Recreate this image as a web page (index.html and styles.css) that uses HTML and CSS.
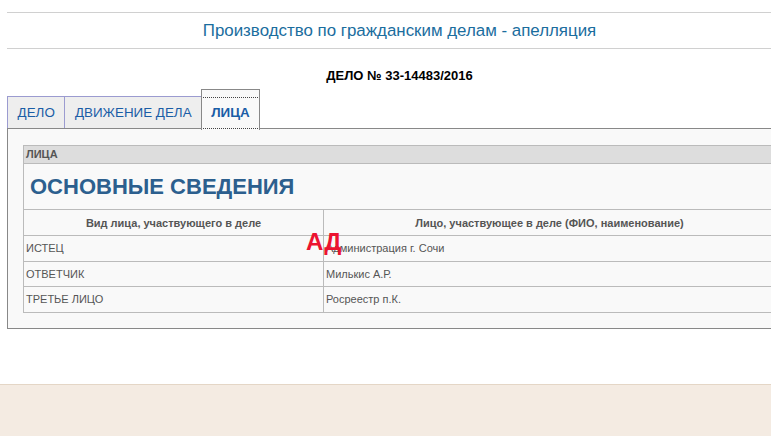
FILE: index.html
```html
<!DOCTYPE html>
<html lang="ru">
<head>
<meta charset="utf-8">
<title>Производство по гражданским делам - апелляция</title>
<link rel="stylesheet" href="styles.css">
</head>
<body>
<div class="page">
  <div class="title">Производство по гражданским делам - апелляция</div>
  <div class="case">ДЕЛО № 33-14483/2016</div>
  <div class="tabs">
    <div class="tab">ДЕЛО</div>
    <div class="tab">ДВИЖЕНИЕ ДЕЛА</div>
    <div class="tab active"><span class="focus">ЛИЦА</span></div>
  </div>
  <div class="panel">
    <table class="grid">
      <tr><td class="cap" colspan="2">ЛИЦА</td></tr>
      <tr><td class="heading" colspan="2">ОСНОВНЫЕ СВЕДЕНИЯ</td></tr>
      <tr class="head"><th class="c1">Вид лица, участвующего в деле</th><th>Лицо, участвующее в деле (ФИО, наименование)</th></tr>
      <tr><td>ИСТЕЦ</td><td>Администрация г. Сочи</td></tr>
      <tr><td>ОТВЕТЧИК</td><td>Милькис А.Р.</td></tr>
      <tr><td>ТРЕТЬЕ ЛИЦО</td><td>Росреестр п.К.</td></tr>
    </table>
  </div>
  <div class="stamp">АД</div>
</div>
<div class="footer"></div>
</body>
</html>
```

FILE: styles.css
```css
html, body {
  margin: 0;
  padding: 0;
  overflow: hidden;
  background: #fff;
  font-family: "Liberation Sans", Arial, sans-serif;
}
.page {
  position: relative;
  margin-left: 7px;
  width: 785px;
  padding-top: 12px;
}
.title {
  border-top: 1px solid #d0d0d0;
  border-bottom: 1px solid #d0d0d0;
  height: 35px;
  line-height: 36px;
  text-align: center;
  font-size: 16.9px;
  color: #1a6d9e;
}
.case {
  margin-top: 17px;
  height: 24px;
  line-height: 20px;
  text-align: center;
  font-size: 13px;
  font-weight: bold;
  color: #000;
}
.tabs {
  display: flex;
  align-items: flex-end;
  height: 39px;
  margin-bottom: -1px;
  position: relative;
  z-index: 1;
}
.tab {
  box-sizing: border-box;
  height: 32px;
  line-height: 32px;
  padding: 0 9.6px;
  font-size: 13.4px;
  color: #1a5da6;
  background: #eeeeee;
  border: 1px solid #9b9bd0;
  border-bottom: none;
  margin-bottom: 1px;
}
.tab + .tab {
  border-left: none;
}
.tab.active {
  height: 41px;
  margin-bottom: -1px;
  margin-left: -1px;
  padding: 7px 1px 0;
  background: #f9f9f9;
  border: 1px solid #888;
  border-bottom: none;
  font-weight: bold;
  line-height: 31px;
}
.focus {
  display: block;
  padding: 0 8px;
  height: 32px;
  border-top: 1px dotted #444;
  border-bottom: 1px dotted #444;
  box-sizing: border-box;
  line-height: 30px;
}
.panel {
  border: 1px solid #888;
  background: #f9f9f9;
  padding: 16px 15px 15px;
}
.grid {
  width: 100%;
  border-collapse: collapse;
  font-size: 11px;
  color: #555;
}
.grid td, .grid th {
  border: 1px solid #bbb;
  padding: 0 2px;
  text-align: left;
}
.grid .cap {
  background: #dddddd;
  font-weight: bold;
  height: 17px;
  line-height: 17px;
  padding-left: 2px;
}
.grid .heading {
  height: 45px;
  font-size: 22px;
  font-weight: bold;
  color: #2c5f8e;
  padding: 0 0 0 6px;
}
.grid .head th {
  height: 25px;
  font-weight: bold;
  text-align: center;
}
.grid .c1 {
  width: 295px;
}
.grid tr td {
  height: 24.6px;
}
.stamp {
  position: absolute;
  left: 299px;
  top: 230px;
  font-size: 24px;
  line-height: 1;
  font-weight: bold;
  color: #ec1330;
}
.footer {
  margin-top: 55px;
  height: 60px;
  background: #f4ebe2;
  border-top: 1px solid #e4d6c6;
}
```
